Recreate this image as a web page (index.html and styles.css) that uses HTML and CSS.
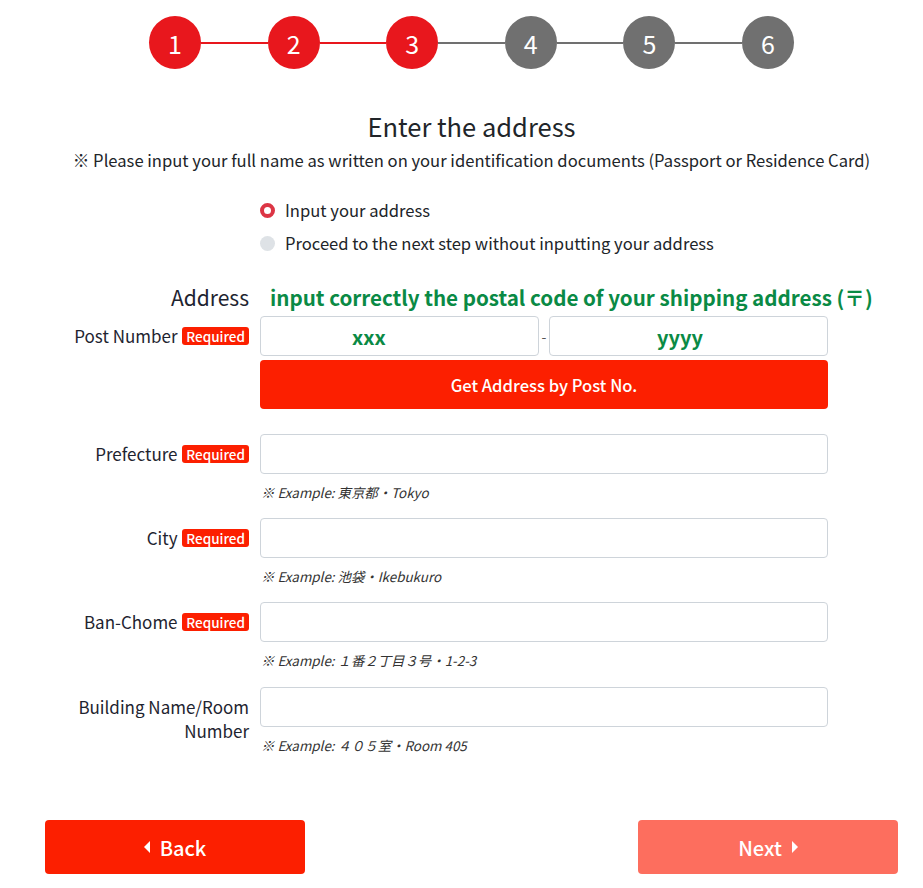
FILE: index.html
```html
<!DOCTYPE html>
<html lang="en">
<head>
    <meta charset="UTF-8">
    <meta name="viewport" content="width=device-width, initial-scale=1.0">
    <title>Enter the address</title>
    <link rel="stylesheet" href="styles.css">
</head>
<body>
    <div class="page">
        <!-- Steps -->
        <div class="steps">
            <span class="step done">1</span>
            <span class="line done"></span>
            <span class="step done">2</span>
            <span class="line done"></span>
            <span class="step done">3</span>
            <span class="line"></span>
            <span class="step">4</span>
            <span class="line"></span>
            <span class="step">5</span>
            <span class="line"></span>
            <span class="step">6</span>
        </div>

        <h1 class="title">Enter the address</h1>
        <p class="note">※ Please input your full name as written on your identification documents (Passport or Residence Card)</p>

        <div class="choice">
            <label class="radio"><span class="dot checked"></span>Input your address</label>
            <label class="radio"><span class="dot"></span>Proceed to the next step without inputting your address</label>
        </div>

        <!-- Address form -->
        <div class="form">
            <div class="row heading">
                <div class="label">Address</div>
                <div class="hint">input correctly the postal code of your shipping address (〒)</div>
            </div>

            <div class="row post">
                <div class="label">Post Number <span class="req">Required</span></div>
                <div class="field">
                    <div class="zip">
                        <input type="text" class="input zip-a" placeholder="xxx">
                        <span class="dash">-</span>
                        <input type="text" class="input zip-b" placeholder="yyyy">
                    </div>
                    <button class="get-btn">Get Address by Post No.</button>
                </div>
            </div>

            <div class="row">
                <div class="label">Prefecture <span class="req">Required</span></div>
                <div class="field">
                    <input type="text" class="input">
                    <div class="example">※ Example: 東京都・Tokyo</div>
                </div>
            </div>

            <div class="row">
                <div class="label">City <span class="req">Required</span></div>
                <div class="field">
                    <input type="text" class="input">
                    <div class="example">※ Example: 池袋・Ikebukuro</div>
                </div>
            </div>

            <div class="row">
                <div class="label">Ban-Chome <span class="req">Required</span></div>
                <div class="field">
                    <input type="text" class="input">
                    <div class="example">※ Example: １番２丁目３号・1-2-3</div>
                </div>
            </div>

            <div class="row">
                <div class="label">Building Name/Room Number</div>
                <div class="field">
                    <input type="text" class="input">
                    <div class="example">※ Example: ４０５室・Room 405</div>
                </div>
            </div>
        </div>

        <div class="nav">
            <a href="#" class="btn back"><span class="tri left"></span>Back</a>
            <a href="#" class="btn next">Next<span class="tri right"></span></a>
        </div>
    </div>
</body>
</html>
```

FILE: styles.css
```css
:root {
    --red: #e8171d;
    --grey: #707070;
    --btn-red: #fc1f00;
    --btn-light: #fd6e5e;
    --green: #0a8a45;
    --text: #212529;
    --border: #ced4da;
}

* {
    margin: 0;
    padding: 0;
    box-sizing: border-box;
}

body {
    font-family: "Noto Sans CJK JP", "Noto Sans", sans-serif;
    color: var(--text);
    background: #fff;
}

.page {
    width: 853px;
    margin-left: 45px;
    padding-top: 16px;
}

/* Steps */
.steps {
    width: 645px;
    margin: 0 auto;
    display: flex;
    align-items: center;
}

.step {
    width: 52px;
    height: 53px;
    border-radius: 50%;
    background: var(--grey);
    color: #fff;
    font-size: 25px;
    display: flex;
    align-items: center;
    justify-content: center;
    flex-shrink: 0;
}

.step.done {
    background: var(--red);
}

.line {
    flex: 1;
    height: 2px;
    background: var(--grey);
}

.line.done {
    background: var(--red);
}

.title {
    font-size: 25.5px;
    font-weight: 400;
    line-height: 31px;
    text-align: center;
    margin-top: 41px;
}

.note {
    font-size: 16.6px;
    line-height: 24px;
    text-align: center;
    margin-top: 7px;
}

/* Radios */
.choice {
    margin: 26px 0 0 215px;
    display: flex;
    flex-direction: column;
    gap: 9px;
}

.radio {
    display: flex;
    align-items: center;
    gap: 10px;
    font-size: 16.6px;
    line-height: 24px;
}

.dot {
    width: 15px;
    height: 15px;
    border-radius: 50%;
    background: #dee2e6;
}

.dot.checked {
    background: #fff;
    border: 4.5px solid #dc3545;
}

/* Form */
.form {
    margin-top: 27px;
}

.row {
    display: grid;
    grid-template-columns: 215px 568px;
    margin-bottom: 16.2px;
}

.label {
    text-align: right;
    padding: 8px 11px 0 0;
    font-size: 17px;
    line-height: 24px;
    font-weight: 400;
    color: #1e2430;
}

.req {
    display: inline-block;
    background: var(--btn-red);
    color: #fff;
    font-size: 13.5px;
    font-weight: 500;
    line-height: 18px;
    padding: 0 4px;
    border-radius: 3px;
    margin-left: 1px;
    vertical-align: 1px;
}

.row.heading {
    grid-template-columns: 215px auto;
    margin-bottom: 4px;
    align-items: center;
}

.row.heading .label {
    padding-top: 0;
    font-size: 21px;
    line-height: 30px;
}

.hint {
    padding-left: 10px;
    color: var(--green);
    font-weight: 700;
    font-size: 20.6px;
    line-height: 30px;
    white-space: nowrap;
}

.input {
    display: block;
    width: 100%;
    height: 40px;
    border: 1px solid var(--border);
    border-radius: 4px;
    font-family: inherit;
    font-size: 16.6px;
    padding: 0 12px;
}

.zip {
    display: flex;
    align-items: center;
    justify-content: space-between;
}

.zip .input {
    width: 279px;
    font-size: 20px;
    font-weight: 700;
}

.zip .input::placeholder {
    color: var(--green);
    opacity: 1;
}

.zip-a {
    padding-left: 91px;
}

.zip-b {
    padding-left: 107px;
}

.dash {
    font-size: 14px;
    color: #555;
}

.get-btn {
    display: block;
    width: 100%;
    height: 49px;
    margin-top: 4px;
    border: none;
    border-radius: 4px;
    background: var(--btn-red);
    color: #fff;
    font-family: inherit;
    font-size: 16.6px;
    font-weight: 500;
}

.row.post {
    margin-bottom: 25px;
}

.example {
    margin-top: 8px;
    font-size: 13.4px;
    line-height: 20px;
    font-style: italic;
    color: #333;
    padding-left: 1px;
}

/* Bottom buttons */
.nav {
    display: flex;
    justify-content: space-between;
    margin-top: 65.5px;
}

.btn {
    width: 260px;
    height: 54px;
    border-radius: 4px;
    color: #fff;
    text-decoration: none;
    font-size: 20px;
    font-weight: 500;
    display: flex;
    align-items: center;
    justify-content: center;
    gap: 10px;
}

.btn.back {
    background: var(--btn-red);
}

.btn.next {
    background: var(--btn-light);
}

.tri {
    width: 0;
    height: 0;
    border-top: 6px solid transparent;
    border-bottom: 6px solid transparent;
}

.tri.left {
    border-right: 6px solid #fff;
}

.tri.right {
    border-left: 6px solid #fff;
}
```
